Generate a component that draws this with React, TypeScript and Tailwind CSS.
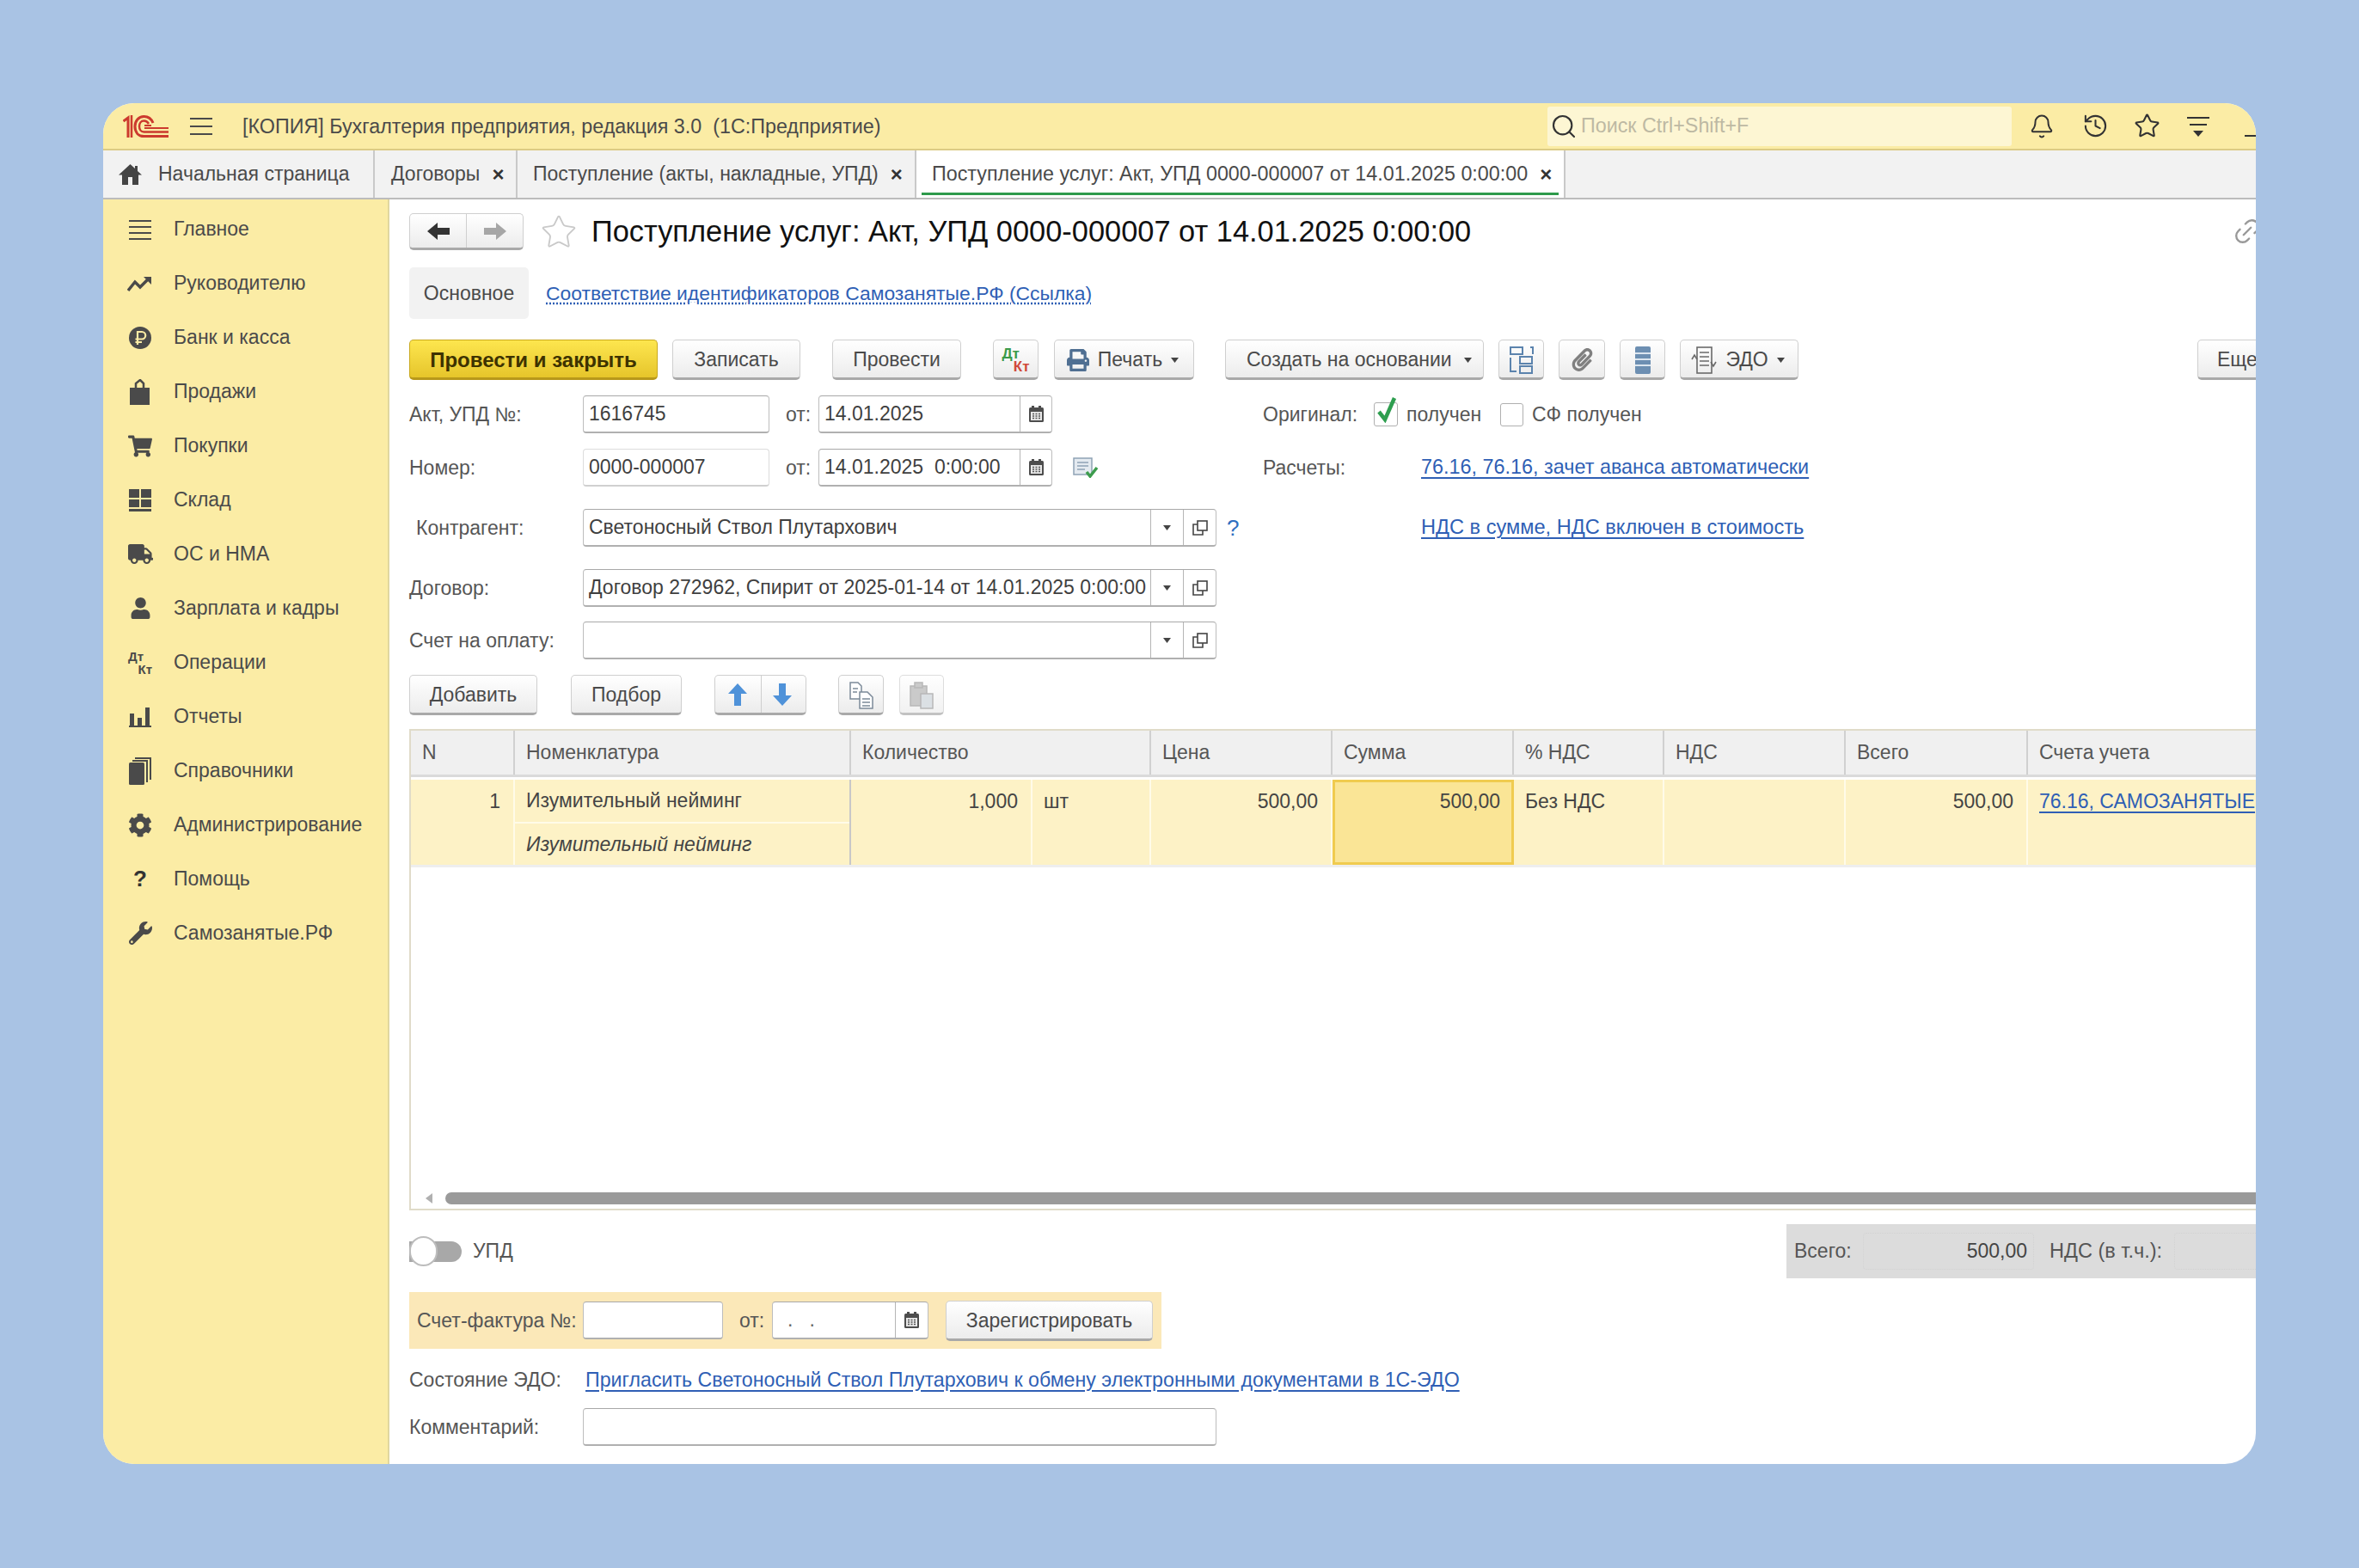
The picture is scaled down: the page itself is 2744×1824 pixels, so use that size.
import React from "react";
import { Bell, History, Star, Search, Link2 } from "lucide-react";
import { FaShoppingCart, FaTruck, FaUser, FaCog, FaWrench, FaPrint, FaPaperclip } from "react-icons/fa";

const Logo = () => (
  <svg width="53" height="26" viewBox="0 0 53 26" fill="none" stroke="#cc3a2e" strokeWidth="3" className="shrink-0">
    <path d="M0.5 7 L6 3 V26" />
    <path d="M10 0 V26" strokeWidth="2.5" />
    <path d="M35 9 C33 4 29 1.5 24.500 1.500 C18 1.500 14 7 14 13 C14 20 18 24.500 24.500 24.500 H53" />
    <path d="M30 10 C28.500 7.500 27 6.500 24.500 6.500 C21 6.500 19 9.500 19 13 C19 16.500 21 19.500 24.500 19.500 H53" strokeWidth="2.500" />
    <path d="M25 12 H33 M25 15 H53" strokeWidth="2" />
  </svg>
);

const Lines = ({ n = 3 }: { n?: number }) => (
  <svg width="26" height="24" viewBox="0 0 26 24" stroke="#4a4a4a" strokeWidth="2">
    {n === 3 ? (
      <path d="M0 3H26M0 12H26M0 21H26" />
    ) : (
      <path d="M0 2H26M0 9H26M0 16H26M0 23H26" />
    )}
  </svg>
);

const Home = () => (
  <svg width="27" height="24" viewBox="0 0 27 24" fill="#444" className="shrink-0">
    <path d="M13.500 0 L19 5 V2 H22 V8 L27 12.500 H23 V24 H16 V15 H11 V24 H4 V12.500 H0 Z" />
  </svg>
);
const Trend = () => (
  <svg width="30" height="20" viewBox="0 0 30 20" fill="none" stroke="#4a4a4a" strokeWidth="3.500">
    <path d="M1 18 L9 8 L15 14 L25 4" />
    <path d="M19 2 H28 V11 Z" fill="#4a4a4a" stroke="none" />
  </svg>
);
const Ruble = () => (
  <svg width="26" height="26" viewBox="0 0 26 26">
    <circle cx="13" cy="13" r="13" fill="#4a4a4a" />
    <path d="M10 21 V6 H15 A4 4 0 0 1 15 14.500 H7.500 M7.500 18 H15" fill="none" stroke="#fbeca5" strokeWidth="2.200" />
  </svg>
);
const Bag = () => (
  <svg width="24" height="30" viewBox="0 0 24 30" fill="#4a4a4a">
    <rect x="0" y="10" width="23" height="20" />
    <path d="M7 11 V5 L12 1 L16 5 V11" fill="none" stroke="#4a4a4a" strokeWidth="2.500" />
  </svg>
);
const Grid = () => (
  <svg width="26" height="26" viewBox="0 0 26 26" fill="#4a4a4a">
    <rect x="0" y="0" width="12" height="10" />
    <rect x="14" y="0" width="12" height="10" />
    <rect x="0" y="12" width="12" height="9" />
    <rect x="14" y="12" width="12" height="9" />
    <rect x="0" y="23" width="26" height="3" />
  </svg>
);
const Bars = () => (
  <svg width="26" height="24" viewBox="0 0 26 24" fill="#4a4a4a">
    <rect x="1" y="8" width="5" height="14" />
    <rect x="10" y="13" width="5" height="9" />
    <rect x="19" y="1" width="5" height="21" />
    <rect x="0" y="22" width="26" height="2" />
  </svg>
);
const Books = () => (
  <svg width="26" height="32" viewBox="0 0 26 32">
    <path d="M7 0 H26 V26 H24 V2 H7 Z" fill="#4a4a4a" />
    <path d="M4 3 H22 V29 H20 V5 H4 Z" fill="#4a4a4a" />
    <rect x="0" y="6" width="18" height="26" rx="1.500" fill="#4a4a4a" />
  </svg>
);
const DtKt = () => (
  <div className="relative w-[28px] h-[30px] text-[15px] leading-none font-bold text-[#4a4a4a]">
    <span className="absolute left-0 top-0">Дт</span>
    <span className="absolute right-0 bottom-0">Кт</span>
  </div>
);

const navItems: [string, React.ReactNode][] = [
  ["Главное", <Lines n={4} />],
  ["Руководителю", <Trend />],
  ["Банк и касса", <Ruble />],
  ["Продажи", <Bag />],
  ["Покупки", <FaShoppingCart size={28} color="#4a4a4a" />],
  ["Склад", <Grid />],
  ["ОС и НМА", <FaTruck size={29} color="#4a4a4a" />],
  ["Зарплата и кадры", <FaUser size={25} color="#4a4a4a" />],
  ["Операции", <DtKt />],
  ["Отчеты", <Bars />],
  ["Справочники", <Books />],
  ["Администрирование", <FaCog size={28} color="#4a4a4a" />],
  ["Помощь", <span className="text-[26px] font-bold text-[#333]">?</span>],
  ["Самозанятые.РФ", <FaWrench size={27} color="#4a4a4a" />],
];

const Btn = ({ className = "", children }: { className?: string; children?: React.ReactNode }) => (
  <div className={`h-[47px] pt-[2px] shrink-0 flex items-center justify-center gap-[10px] rounded-[5px] border border-[#cfcfcf] border-b-[3px] border-b-[#a9a9a9] bg-linear-to-b from-white to-[#ececec] text-[23px] text-[#4a4a4a] whitespace-nowrap ${className}`}>
    {children}
  </div>
);

const Tri = () => (
  <svg width="9" height="6" viewBox="0 0 9 6" className="shrink-0"><path d="M0 0H9L4.500 6Z" fill="#444" /></svg>
);
const Cal = () => (
  <svg width="17" height="19" viewBox="0 0 17 19">
    <rect x="0" y="2" width="17" height="17" rx="1.500" fill="#4d4d4d" />
    <rect x="3" y="0" width="3" height="4" fill="#4d4d4d" />
    <rect x="11" y="0" width="3" height="4" fill="#4d4d4d" />
    <rect x="2" y="7" width="13" height="10" fill="#e8e8e8" />
    <path d="M4 9.500H13M4 12H13M4 14.500H13" stroke="#555" strokeWidth="1.300" strokeDasharray="2 1.500" />
  </svg>
);
const Open = () => (
  <svg width="18" height="18" viewBox="0 0 18 18" fill="none" stroke="#444" strokeWidth="1.600">
    <rect x="6" y="1" width="11" height="11" />
    <path d="M6 5H1V17H12V12" />
  </svg>
);

const Box = ({ className = "", children }: { className?: string; children?: React.ReactNode }) => (
  <div className={`h-[44px] shrink-0 flex items-center rounded-[4px] border border-[#bdbdbd] border-t-[#a8a8a8] border-b-2 border-b-[#b0b0b0] bg-white text-[23px] text-[#3f3f3f] whitespace-nowrap overflow-hidden ${className}`}>
    {children}
  </div>
);
const Cell = ({ className = "", children }: { className?: string; children?: React.ReactNode }) => (
  <div className={`h-full flex items-center justify-center border-l border-[#b5b5b5] shrink-0 ${className}`}>{children}</div>
);

const Label = ({ className = "", children }: { className?: string; children?: React.ReactNode }) => (
  <div className={`shrink-0 text-[23px] text-[#565656] whitespace-nowrap ${className}`}>{children}</div>
);
const A = ({ className = "", children }: { className?: string; children?: React.ReactNode }) => (
  <span className={`text-[#2f5fb5] underline underline-offset-[4px] whitespace-nowrap shrink-0 ${className}`}>{children}</span>
);

const Tab = ({ className = "", children, close = true }: { className?: string; children?: React.ReactNode; close?: boolean }) => (
  <div className={`h-full shrink-0 flex items-center border-r-2 border-[#c9c9c9] text-[#4a4a4a] whitespace-nowrap ${className}`}>
    {children}
    {close && <span className="ml-[14px] text-[#333] font-bold text-[24px] leading-none">×</span>}
  </div>
);

const Head = ({ className = "", children }: { className?: string; children?: React.ReactNode }) => (
  <div className={`h-full flex items-center pl-[13px] bg-[#f0f0f0] border-r-2 border-[#d0d0d0] text-[23px] text-[#565656] whitespace-nowrap overflow-hidden ${className}`}>{children}</div>
);
const Td = ({ className = "", children }: { className?: string; children?: React.ReactNode }) => (
  <div className={`h-full flex items-start pt-[11px] pl-[13px] pr-[15px] bg-[#fdf2c6] border-r-2 border-[#fffbe8] text-[23px] text-[#444] whitespace-nowrap overflow-hidden ${className}`}>{children}</div>
);
const TdText = ({ children }: { children?: React.ReactNode }) => <span className="-mt-[3px]">{children}</span>;

export default function App() {
  return (
    <div className="w-[2744px] h-[1824px] bg-[#a9c3e4] pt-[120px] pl-[120px] overflow-hidden [font-family:'Liberation_Sans',Arial,sans-serif]">
      <div className="w-[2504px] h-[1583px] rounded-[36px] overflow-hidden bg-white flex flex-col">
        {/* title bar */}
        <div className="h-[55px] shrink-0 bg-[#fbeca5] border-b-2 border-[#dccb85] flex items-center pl-[23px] overflow-hidden">
          <Logo />
          <div className="ml-[25px] shrink-0"><Lines n={3} /></div>
          <div className="ml-[35px] pt-[1px] w-[1518px] shrink-0 text-[23.3px] text-[#4a4a4a] whitespace-pre">[КОПИЯ] Бухгалтерия предприятия, редакция 3.0  (1С:Предприятие)</div>
          <div className="w-[540px] h-[46px] shrink-0 ml-0 bg-[#fdf6d3] rounded-[3px] flex items-center pl-[3px]">
            <Search size={32} color="#333" strokeWidth={1.6} />
            <span className="ml-[4px] text-[23.3px] text-[#bdb9a3]">Поиск Ctrl+Shift+F</span>
          </div>
          <div className="ml-[20px] shrink-0"><Bell size={30} color="#333" strokeWidth={1.6} /></div>
          <div className="ml-[32px] shrink-0"><History size={31} color="#333" strokeWidth={1.6} /></div>
          <div className="ml-[29px] shrink-0"><Star size={31} color="#333" strokeWidth={1.6} /></div>
          <div className="ml-[31px] shrink-0">
            <svg width="26" height="26" viewBox="0 0 26 26" stroke="#333" strokeWidth="2"><path d="M0 3H26M3 11H23" /><path d="M7 18H19L13 25Z" fill="#333" stroke="none" /></svg>
          </div>
          <div className="ml-[41px] w-[20px] h-[2px] mt-[22px] bg-[#333] shrink-0" />
        </div>
        {/* tabs */}
        <div className="h-[57px] shrink-0 bg-[#f2f2f2] border-b-2 border-[#bcbcbc] flex items-center">
          <Tab className="w-[316px] pl-[18px] text-[23px]" close={false}>
            <Home />
            <span className="ml-[19px]">Начальная страница</span>
          </Tab>
          <Tab className="w-[166px] pl-[19px] text-[23px]">Договоры</Tab>
          <Tab className="w-[464px] pl-[18px] text-[23px]">Поступление (акты, накладные, УПД)</Tab>
          <Tab className="w-[755px] pl-[18px] text-[23.3px] bg-white relative">
            Поступление услуг: Акт, УПД 0000-000007 от 14.01.2025 0:00:00
            <div className="absolute left-[6px] right-[6px] bottom-[3px] h-[3px] bg-[#2e9a4b]" />
          </Tab>
        </div>
        <div className="flex flex-1 min-h-0">
          {/* sidebar */}
          <div className="w-[333px] shrink-0 bg-[#fbeca5] border-r-2 border-[#e0d79f] pt-[3px]">
            {navItems.map(([name, icon]) => (
              <div key={name} className="h-[63px] flex items-center">
                <div className="w-[82px] pl-[4px] flex justify-center shrink-0">{icon}</div>
                <span className="text-[23px] text-[#4a4a4a] whitespace-nowrap">{name}</span>
              </div>
            ))}
          </div>
          {/* content */}
          <div className="flex-1 min-w-0 pl-[23px] overflow-hidden">
            <div className="h-[43px] mt-[16px] flex items-center relative">
              <div className="w-[133px] h-[43px] shrink-0 flex rounded-[5px] border border-[#cfcfcf] border-b-[3px] border-b-[#a9a9a9] bg-linear-to-b from-white to-[#ececec]">
                <div className="w-[66px] flex items-center justify-center border-r border-[#cfcfcf]">
                  <svg width="26" height="20" viewBox="0 0 26 20"><path d="M0 10L12 0V6H26V14H12V20Z" fill="#333" /></svg>
                </div>
                <div className="flex-1 flex items-center justify-center">
                  <svg width="26" height="20" viewBox="0 0 26 20"><path d="M26 10L14 0V6H0V14H14V20Z" fill="#a6a6a6" /></svg>
                </div>
              </div>
              <div className="ml-[19px] shrink-0"><Star size={44} color="#c9c9c9" strokeWidth={1} /></div>
              <div className="ml-[16px] text-[34.4px] text-[#111] whitespace-nowrap shrink-0">Поступление услуг: Акт, УПД 0000-000007 от 14.01.2025 0:00:00</div>
              <div className="absolute right-[-8px] top-[3px]"><Link2 size={36} color="#999" strokeWidth={1.6} className="-rotate-45" /></div>
            </div>
            <div className="mt-[20px] flex items-center h-[60px]">
              <div className="w-[139px] h-[60px] shrink-0 rounded-[5px] bg-[#f2f2f2] flex items-center justify-center text-[23px] text-[#4a4a4a]">Основное</div>
              <span className="ml-[20px] text-[22.9px] text-[#2f5fb5] underline decoration-dotted underline-offset-[4px] whitespace-nowrap">Соответствие идентификаторов Самозанятые.РФ (Ссылка)</span>
            </div>
            {/* toolbar */}
            <div className="mt-[24px] flex items-center h-[47px]">
              <div className="w-[289px] h-[47px] pt-[2px] shrink-0 flex items-center justify-center rounded-[5px] border border-[#c9a91f] border-b-[3px] border-b-[#b8981a] bg-linear-to-b from-[#fde64e] to-[#e6c52a] text-[24px] font-bold text-[#3d3200] whitespace-nowrap">Провести и закрыть</div>
              <Btn className="w-[149px] ml-[17px]">Записать</Btn>
              <Btn className="w-[150px] ml-[37px]">Провести</Btn>
              <Btn className="w-[53px] ml-[37px]">
                <div className="relative w-[32px] h-[32px] text-[17px] leading-none font-bold">
                  <span className="absolute left-0 top-0 text-[#3a9a4a]">Дт</span>
                  <span className="absolute right-0 bottom-0 text-[#d04a3a]">Кт</span>
                </div>
              </Btn>
              <Btn className="w-[163px] ml-[18px]"><FaPrint size={26} color="#4f6f92" className="-ml-[3px]" /><span>Печать</span><Tri /></Btn>
              <Btn className="w-[301px] ml-[36px] justify-start pl-[24px] gap-[14px] text-[23.3px]"><span>Создать на основании</span><Tri /></Btn>
              <Btn className="w-[53px] ml-[17px]">
                <svg width="28" height="32" viewBox="0 0 28 32" fill="none" stroke="#5b83ad" strokeWidth="2"><rect x="1" y="1" width="14" height="8" /><rect x="12" y="12" width="14" height="8" /><rect x="12" y="23" width="14" height="8" /><path d="M24 1H27V9M1 13V29H8" /></svg>
              </Btn>
              <Btn className="w-[54px] ml-[17px]"><FaPaperclip size={27} color="#808080" /></Btn>
              <Btn className="w-[53px] ml-[17px]">
                <svg width="18" height="32" viewBox="0 0 18 32" fill="#6d8fb2"><rect width="18" height="32" rx="2" /><path d="M0 8H18M0 15H18M0 22H18" stroke="#dbe5ef" strokeWidth="2" /></svg>
              </Btn>
              <Btn className="w-[138px] ml-[17px]">
                <svg width="30" height="32" viewBox="0 0 30 32" fill="none" stroke="#6a6a6a" strokeWidth="1.600" className="-ml-[3px]"><rect x="7" y="1" width="17" height="30" /><path d="M10 7H21M10 12H21M10 17H21M10 22H21M1 15L4 10L7 15M23 18L26 23L29 18" /></svg>
                <span>ЭДО</span><Tri />
              </Btn>
              <Btn className="w-[90px] ml-[464px] justify-start pl-[22px]">Еще</Btn>
            </div>
            {/* Акт */}
            <div className="mt-[18px] flex items-center h-[44px]">
              <Label className="w-[202px]">Акт, УПД №:</Label>
              <Box className="w-[217px] pl-[6px]">1616745</Box>
              <Label className="ml-[19px] w-[38px]">от:</Label>
              <Box className="w-[272px] pl-[6px]">14.01.2025<Cell className="ml-auto w-[37px]"><Cal /></Cell></Box>
              <Label className="ml-[245px] w-[129px]">Оригинал:</Label>
              <div className="w-[28px] h-[28px] shrink-0 rounded-[3px] border border-[#b0b0b0] relative">
                <svg className="absolute left-[2px] -top-[7px]" width="24" height="30" viewBox="0 0 24 30" fill="none" stroke="#2e9e4f" strokeWidth="4.500"><path d="M3 17L10 26L21 1" /></svg>
              </div>
              <Label className="ml-[10px] w-[109px]">получен</Label>
              <div className="w-[27px] h-[27px] shrink-0 rounded-[3px] border border-[#b0b0b0]" />
              <Label className="ml-[10px] text-[23.5px]">СФ получен</Label>
            </div>
            {/* Номер */}
            <div className="mt-[18px] flex items-center h-[44px]">
              <Label className="w-[202px]">Номер:</Label>
              <Box className="w-[217px] pl-[6px] border-[#dcdcdc] border-t-[#dcdcdc] border-b-[#d0d0d0]">0000-000007</Box>
              <Label className="ml-[19px] w-[38px]">от:</Label>
              <Box className="w-[272px] pl-[6px] whitespace-pre">14.01.2025  0:00:00<Cell className="ml-auto w-[37px]"><Cal /></Cell></Box>
              <div className="ml-[24px] w-[30px] shrink-0 flex">
                <svg width="30" height="24" viewBox="0 0 30 24" fill="none"><rect x="1" y="1" width="21" height="19" fill="#e4eaf0" stroke="#8fa3b5" strokeWidth="1.500" /><path d="M5 6H18M5 10H18M5 14H14" stroke="#8fa3b5" strokeWidth="1.500" /><path d="M16 17L20 22L28 12" stroke="#3d9c4d" strokeWidth="3.500" /></svg>
              </div>
              <Label className="ml-[191px] w-[184px]">Расчеты:</Label>
              <A className="text-[23.4px]">76.16, 76.16, зачет аванса автоматически</A>
            </div>
            {/* Контрагент */}
            <div className="mt-[26px] flex items-center h-[44px]">
              <Label className="w-[202px] pl-[8px]">Контрагент:</Label>
              <Box className="w-[737px] pl-[6px]">Светоносный Ствол Плутархович<Cell className="ml-auto w-[38px]"><Tri /></Cell><Cell className="w-[38px]"><Open /></Cell></Box>
              <span className="ml-[12px] w-[226px] shrink-0 text-[26px] text-[#2f6fc0]">?</span>
              <A className="text-[23.6px]">НДС в сумме, НДС включен в стоимость</A>
            </div>
            {/* Договор */}
            <div className="mt-[26px] flex items-center h-[44px]">
              <Label className="w-[202px]">Договор:</Label>
              <Box className="w-[737px] pl-[6px]">Договор 272962, Спирит от 2025-01-14 от 14.01.2025 0:00:00<Cell className="ml-auto w-[38px]"><Tri /></Cell><Cell className="w-[38px]"><Open /></Cell></Box>
            </div>
            {/* Счет */}
            <div className="mt-[17px] flex items-center h-[44px]">
              <Label className="w-[202px]">Счет на оплату:</Label>
              <Box className="w-[737px] pl-[6px]"><Cell className="ml-auto w-[38px]"><Tri /></Cell><Cell className="w-[38px]"><Open /></Cell></Box>
            </div>
            {/* table toolbar */}
            <div className="mt-[18px] flex items-center h-[47px]">
              <Btn className="w-[149px]">Добавить</Btn>
              <Btn className="w-[129px] ml-[39px]">Подбор</Btn>
              <div className="w-[107px] h-[47px] ml-[38px] shrink-0 flex rounded-[5px] border border-[#cfcfcf] border-b-[3px] border-b-[#a9a9a9] bg-linear-to-b from-white to-[#ececec]">
                <div className="w-[54px] pr-[2px] flex items-center justify-center border-r border-[#cfcfcf]">
                  <svg width="22" height="26" viewBox="0 0 22 26"><path d="M11 0L22 12H15V26H7V12H0Z" fill="#4f92d9" /></svg>
                </div>
                <div className="flex-1 pr-[3px] flex items-center justify-center">
                  <svg width="22" height="26" viewBox="0 0 22 26"><path d="M11 26L22 14H15V0H7V14H0Z" fill="#4f92d9" /></svg>
                </div>
              </div>
              <Btn className="w-[53px] ml-[37px]">
                <svg width="28" height="32" viewBox="0 0 28 32" fill="#fff" stroke="#7c8a99" strokeWidth="1.500"><path d="M1 1H10L14 5V20H1Z" /><path d="M12 12H21L27 18V31H12Z" /><path d="M15 20H24M15 24H24M15 28H24M4 8H10M4 12H9" /></svg>
              </Btn>
              <Btn className="w-[52px] ml-[18px] opacity-70">
                <svg width="28" height="32" viewBox="0 0 28 32" fill="#b5b5b5" stroke="#9a9a9a" strokeWidth="1.500"><path d="M1 5H20V28H1Z" /><rect x="6" y="1" width="9" height="6" /><path d="M13 14H27V31H13Z" fill="#ccd3da" /></svg>
              </Btn>
            </div>
            {/* table */}
            <div className="mt-[16px] h-[560px] flex flex-col border-t-2 border-l-2 border-b-2 border-[#e0dbc9] shrink-0 overflow-hidden">
              <div className="grid grid-cols-[121px_391px_211px_138px_211px_211px_175px_211px_212px_267px] h-[54px] border-b-[3px] border-[#dadada] shrink-0 w-[2148px]">
                <Head>N</Head>
                <Head>Номенклатура</Head>
                <Head className="col-span-2">Количество</Head>
                <Head>Цена</Head>
                <Head>Сумма</Head>
                <Head>% НДС</Head>
                <Head>НДС</Head>
                <Head>Всего</Head>
                <Head>Счета учета</Head>
              </div>
              <div className="mt-[3px] grid grid-cols-[121px_391px_211px_138px_211px_211px_175px_211px_212px_267px] h-[99px] shrink-0 w-[2148px]">
                <Td className="justify-end"><TdText>1</TdText></Td>
                <div className="h-full flex flex-col border-r-2 border-[#c8c8c8]">
                  <div className="h-[51px] flex items-center pl-[13px] bg-[#fdf2c6] border-b-2 border-[#fffbe8] text-[23px] text-[#444] whitespace-nowrap">Изумительный нейминг</div>
                  <div className="flex-1 flex items-center pl-[13px] bg-[#fdf2c6] text-[23px] italic text-[#444] whitespace-nowrap">Изумительный нейминг</div>
                </div>
                <Td className="justify-end"><TdText>1,000</TdText></Td>
                <Td><TdText>шт</TdText></Td>
                <Td className="justify-end"><TdText>500,00</TdText></Td>
                <Td className="justify-end !bg-[#fae596] !border-[3px] !border-[#f0cb4f] !pt-[8px] !pr-[13px]"><TdText>500,00</TdText></Td>
                <Td><TdText>Без НДС</TdText></Td>
                <Td />
                <Td className="justify-end"><TdText>500,00</TdText></Td>
                <Td className="!pr-0 !border-r-0"><TdText><A className="text-[23px]">76.16, САМОЗАНЯТЫЕ</A></TdText></Td>
              </div>
              <div className="h-[3px] bg-[#eeeeee] shrink-0" />
              <div className="flex-1" />
              <div className="h-[14px] mb-[5px] shrink-0 flex items-center pl-[17px]">
                <svg width="8" height="12" viewBox="0 0 8 12" className="shrink-0"><path d="M8 0V12L0 6Z" fill="#b0b0b0" /></svg>
                <div className="ml-[15px] h-[14px] flex-1 rounded-l-[7px] bg-[#9a9a9a]" />
              </div>
            </div>
            {/* toggle + totals */}
            <div className="mt-[16px] h-[63px] flex items-center justify-between">
              <div className="flex items-center">
                <div className="relative w-[61px] h-[24px] rounded-r-[12px] bg-[#a8a8a8] shrink-0">
                  <div className="absolute left-0 -top-[6px] w-[33px] h-[35px] rounded-full bg-white border-2 border-[#bdbdbd]" />
                </div>
                <Label className="ml-[13px]">УПД</Label>
              </div>
              <div className="w-[546px] h-[63px] bg-[#dcdcdc] flex items-center pl-[9px] text-[23px] text-[#555] shrink-0">
                <span className="w-[80px] shrink-0">Всего:</span>
                <div className="w-[199px] h-[43px] shrink-0 flex items-center justify-end pr-[7px] rounded-[4px] border border-dotted border-[#d2d2d2] text-[#444]">500,00</div>
                <span className="ml-[18px] w-[145px] shrink-0 whitespace-nowrap text-[23.5px]">НДС (в т.ч.):</span>
                <div className="w-[100px] h-[43px] shrink-0 rounded-l-[4px] border border-dotted border-[#d2d2d2]" />
              </div>
            </div>
            {/* invoice */}
            <div className="mt-[16px] w-[875px] h-[66px] bg-[#fbe8b8] flex items-center pl-[9px]">
              <Label className="w-[193px] text-[#4f4f4f]">Счет-фактура №:</Label>
              <Box className="w-[163px]" />
              <Label className="ml-[19px] w-[38px] text-[#4f4f4f]">от:</Label>
              <Box className="w-[182px] pl-[17px] text-[#666] whitespace-pre">.   .<Cell className="ml-auto w-[38px]"><Cal /></Cell></Box>
              <Btn className="w-[241px] ml-[20px]">Зарегистрировать</Btn>
            </div>
            {/* edo */}
            <div className="mt-[14px] h-[44px] flex items-center">
              <Label className="w-[205px]">Состояние ЭДО:</Label>
              <A className="text-[23.2px]">Пригласить Светоносный Ствол Плутархович к обмену электронными документами в 1С-ЭДО</A>
            </div>
            <div className="mt-[11px] h-[44px] flex items-center">
              <Label className="w-[202px]">Комментарий:</Label>
              <Box className="w-[737px]" />
            </div>
          </div>
        </div>
      </div>
    </div>
  );
}
